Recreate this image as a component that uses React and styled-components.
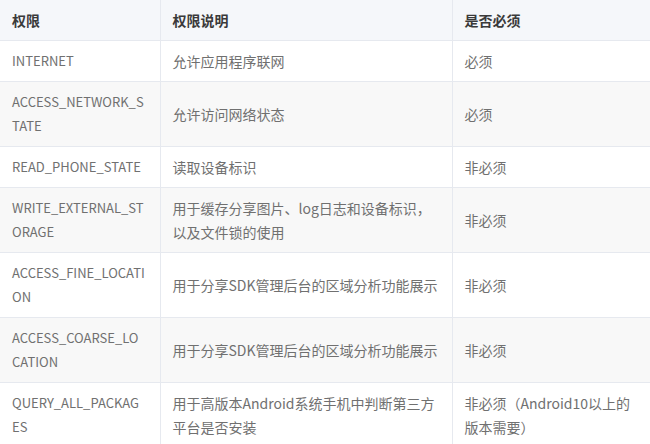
import React from 'react';
import styled, { createGlobalStyle } from 'styled-components';

const rows = [
  { name: 'INTERNET', desc: '允许应用程序联网', need: '必须' },
  { name: 'ACCESS_NETWORK_STATE', desc: '允许访问网络状态', need: '必须' },
  { name: 'READ_PHONE_STATE', desc: '读取设备标识', need: '非必须' },
  { name: 'WRITE_EXTERNAL_STORAGE', desc: '用于缓存分享图片、log日志和设备标识，以及文件锁的使用', need: '非必须' },
  { name: 'ACCESS_FINE_LOCATION', desc: '用于分享SDK管理后台的区域分析功能展示', need: '非必须' },
  { name: 'ACCESS_COARSE_LOCATION', desc: '用于分享SDK管理后台的区域分析功能展示', need: '非必须' },
  { name: 'QUERY_ALL_PACKAGES', desc: '用于高版本Android系统手机中判断第三方平台是否安装', need: '非必须（Android10以上的版本需要）' },
];

const App = () => (
  <>
    <GlobalStyle />
    <Table>
      <colgroup>
        <col style={{ width: 160 }} />
        <col style={{ width: 292 }} />
        <col />
      </colgroup>
      <thead>
        <tr>
          <Th>权限</Th>
          <Th>权限说明</Th>
          <Th>是否必须</Th>
        </tr>
      </thead>
      <tbody>
        {rows.map((row, i) => (
          <Row key={row.name} $striped={i % 2 === 1}>
            <NameCell>{row.name}</NameCell>
            <Td>{row.desc}</Td>
            <Td>{row.need}</Td>
          </Row>
        ))}
      </tbody>
    </Table>
  </>
);

const GlobalStyle = createGlobalStyle`
  body {
    margin: 0;
    background: #fff;
    font-family: "Noto Sans CJK SC", "Noto Sans", sans-serif;
  }
`;

const Table = styled.table`
  width: 650px;
  border-collapse: collapse;
  table-layout: fixed;
  font-size: 14px;
  line-height: 24px;
`;

const Th = styled.th`
  text-align: left;
  font-weight: 600;
  color: #3a3a3a;
  background: #f5f7fa;
  padding: 8px 12px;
  border-bottom: 1px solid #e6e9ef;
  border-left: 1px solid #e6e9ef;
  &:first-child {
    border-left: none;
  }
`;

const Row = styled.tr`
  background: ${(p) => (p.$striped ? '#f8f8f8' : '#fff')};
`;

const Td = styled.td`
  color: #707070;
  padding: 8px 12px;
  word-break: break-all;
  vertical-align: middle;
  border-bottom: 1px solid #e6e9ef;
  border-left: 1px solid #e6e9ef;
  &:first-child {
    border-left: none;
  }
`;

const NameCell = styled(Td)`
  font-size: 13px;
  padding-right: 14px;
`;

export default App;
